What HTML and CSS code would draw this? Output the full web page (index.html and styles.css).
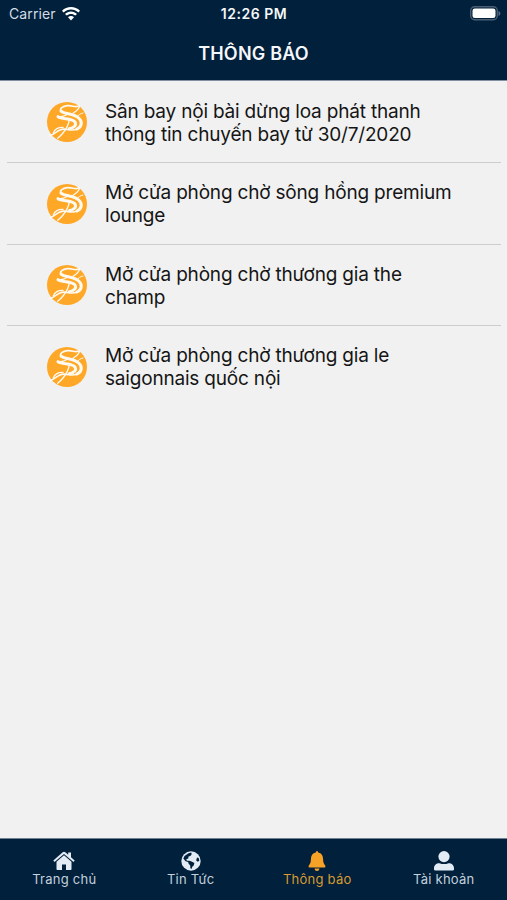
FILE: index.html
```html
<!DOCTYPE html>
<html lang="vi">
<head>
<meta charset="utf-8">
<title>Thông báo</title>
<link rel="stylesheet" href="styles.css">
</head>
<body>
<svg width="0" height="0" class="defs" aria-hidden="true">
  <symbol id="logo" viewBox="0 0 120 120">
    <circle cx="60" cy="60" r="60" fill="#ffa726"/>
    <g fill="none" stroke="#fffaf0" stroke-linecap="round" stroke-linejoin="round">
      <path stroke-width="5" d="M97 11C87 19 76 9 61 11C47 13 37 20 42 27"/>
      <path stroke-width="9" d="M42 27C51 37 80 34 95 48C108 60 104 74 90 81"/>
      <path stroke-width="9" d="M33 44C46 53 74 47 84 60C90 70 80 77 67 80"/>
      <path stroke-width="4" d="M33 43C46 45 57 41 62 35"/>
      <path stroke-width="4" d="M97 11C99 21 88 27 78 34"/>
      <path stroke-width="3" d="M108 33C99 34 94 40 90 45"/>
      <path stroke-width="4" d="M67 52C65 69 58 81 48 93C43 99 37 105 32 109"/>
      <path stroke-width="5" d="M9 101C22 98 29 86 44 82C61 78 73 90 90 81"/>
      <path stroke-width="4" d="M19 93C22 81 35 75 48 76"/>
    </g>
  </symbol>
</svg>
<div class="app">
  <header class="header">
    <div class="status">
      <div class="carrier"><span>Carrier</span>
        <svg class="wifi" viewBox="0 0 18 14"><path d="M9 0C5.600 0 2.500 1.300 0 3.700L1.600 5.400C3.700 3.400 6.200 2.400 9 2.400S14.300 3.400 16.400 5.400L18 3.700C15.500 1.300 12.400 0 9 0Z"/><path d="M9 4.500C6.700 4.500 4.600 5.400 3 6.900L4.700 8.600C5.900 7.500 7.400 6.900 9 6.900S12.100 7.500 13.300 8.600L15 6.900C13.400 5.400 11.300 4.500 9 4.500Z"/><path d="M9 9C7.800 9 6.800 9.400 6 10.200L9 13.500L12 10.200C11.200 9.400 10.200 9 9 9Z"/></svg>
      </div>
      <div class="clock">12:26 PM</div>
      <svg class="battery" viewBox="0 0 31 15"><rect x=".7" y=".7" width="26.600" height="13.100" rx="4" fill="none" stroke="#4a5e74" stroke-width="1.400"/><rect x="2.500" y="2.500" width="23" height="9.500" rx="2.300" fill="#fff"/><path d="M28.500 5C31 6 31 9 28.500 10Z" fill="#586b80"/></svg>
    </div>
    <h1 class="title">THÔNG BÁO</h1>
  </header>
  <main class="list">
    <article class="item"><svg class="logo"><use href="#logo"/></svg><p class="text">Sân bay nội bài dừng loa phát thanh<br>thông tin chuyến bay từ 30/7/2020</p></article>
    <article class="item"><svg class="logo"><use href="#logo"/></svg><p class="text">Mở cửa phòng chờ sông hồng premium<br>lounge</p></article>
    <article class="item"><svg class="logo"><use href="#logo"/></svg><p class="text">Mở cửa phòng chờ thương gia the<br>champ</p></article>
    <article class="item"><svg class="logo"><use href="#logo"/></svg><p class="text">Mở cửa phòng chờ thương gia le<br>saigonnais quốc nội</p></article>
  </main>
  <nav class="tabs">
    <div class="tab"><svg class="icon" viewBox="0 0 22 20"><path d="M11 4.300L3.500 10.800V18.200Q3.500 19 4.300 19H9V13.500H13V19H17.700Q18.500 19 18.500 18.200V10.800Z"/><path d="M11 .8Q11.700 .8 12.300 1.300L15.200 3.800V1.500H18V6.300L21.700 9.500L20.500 10.900L11 2.900L1.500 10.900L.3 9.500L9.700 1.300Q10.300 .8 11 .8Z"/></svg><span>Trang chủ</span></div>
    <div class="tab"><svg class="icon" viewBox="0 0 22 20"><circle cx="11" cy="10" r="9.700"/><path fill="#00203b" d="M8.500 2.200L11.300 1.600L11.700 3.300L10.300 4.900L8.500 5.500L8.300 7.400L6.200 8.300L7 9.700L9.200 9.800L11.600 10.600L14.400 12L13.700 14.400L12.300 15.800L11.500 17.900L10.400 17.200L10.200 14.400L8.500 12.600L8.200 11L5.600 10.300L3.300 7.600L4.500 4.900Z"/><path fill="#00203b" d="M17 6.500L18.700 7L19.300 9.800L17.800 10.800L16.200 9.400Z"/></svg><span>Tin Tức</span></div>
    <div class="tab active"><svg class="icon" viewBox="0 0 22 20"><path d="M11 0Q12.200 0 12.200 1.600C15.600 2.300 17.100 4.700 17.100 8.300C17.100 12 18.200 13.400 19.200 14.500Q20 16.400 18.700 16.400H3.300Q2 16.400 2.800 14.500C3.800 13.400 4.900 12 4.900 8.300C4.900 4.700 6.400 2.300 9.800 1.600Q9.800 0 11 0Z"/><path d="M8.500 17.500H13.500Q13.300 20 11 20T8.500 17.500Z"/></svg><span>Thông báo</span></div>
    <div class="tab"><svg class="icon" viewBox="0 0 22 20"><circle cx="11" cy="5.600" r="5.600"/><path d="M6.500 12.200Q11 14 15.500 12.200C19 12.200 21 14.300 21 17.300V18.300Q21 19.600 19.700 19.600H2.300Q1 19.600 1 18.300V17.300C1 14.300 3 12.200 6.500 12.200Z"/></svg><span>Tài khoản</span></div>
  </nav>
</div>
</body>
</html>
```
FILE: styles.css
```css
* { box-sizing: border-box; }
body { margin: 0; font-family: Inter, "Liberation Sans", sans-serif; background: #f1f1f1; }
.defs { display: block; }
.app { display: flex; flex-direction: column; height: 900px; overflow: hidden; }
.header { flex: none; height: 81px; background: #00203b; border-bottom: 1px solid #8190a0; color: #f5f7fa; }
.status { display: grid; grid-template-columns: 1fr auto 1fr; align-items: center; height: 27px; padding: 0 6px 0 7px; }
.carrier { display: flex; align-items: center; gap: 6px; color: #d5dce5; font-size: 14px; letter-spacing: 0.1px; }
.carrier span { padding-left: 2px; }
.wifi { width: 18px; height: 14px; fill: #fff; }
.clock { font-size: 14px; font-weight: 600; letter-spacing: 0.5px; }
.battery { width: 31px; height: 15px; justify-self: end; }
.title { margin: 15px 0 0; font-size: 18px; line-height: 23px; font-weight: 600; letter-spacing: 0.2px; text-align: center; }
.list { flex: 1; padding: 0.5px 6px 0 7px; }
.item { display: flex; align-items: center; height: 81.5px; padding: 0.5px 0 0 40px; border-bottom: 1px solid #cdcdcd; }
.item:last-child { border-bottom-color: transparent; }
.logo { flex: none; width: 40px; height: 40px; margin-right: 18px; }
.text { margin: 0; padding-top: 1px; color: #151515; font-size: 19px; line-height: 23px; letter-spacing: -0.19px; white-space: nowrap; }
.tabs { flex: none; display: flex; height: 62px; padding: 12px 0 0 1px; background: #00203b; border-top: 1px solid #6f8092; color: #c3d0de; }
.tab { flex: 1; display: flex; flex-direction: column; align-items: center; font-size: 13px; line-height: 16px; letter-spacing: 0.25px; }
.icon { width: 22px; height: 20px; fill: #e3ebf5; }
.active { color: #d99a30; }
.active .icon { fill: #f5a227; }
```
